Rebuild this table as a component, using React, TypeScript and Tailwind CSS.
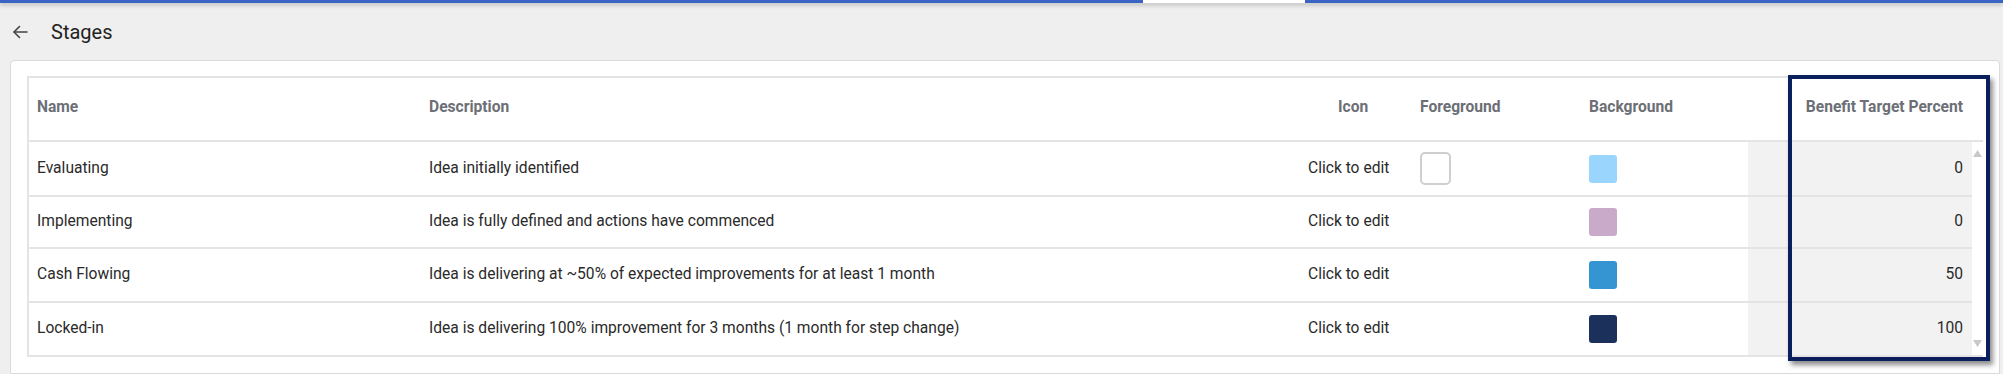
import React from "react";

const rows = [
  { name: "Evaluating", desc: "Idea initially identified", fg: true, bg: "#9ad5fd", pct: "0", h: "h-[53px]" },
  { name: "Implementing", desc: "Idea is fully defined and actions have commenced", fg: false, bg: "#c9aac8", pct: "0", h: "h-[50px]" },
  { name: "Cash Flowing", desc: "Idea is delivering at ~50% of expected improvements for at least 1 month", fg: false, bg: "#3595d3", pct: "50", h: "h-[52px]" },
  { name: "Locked-in", desc: "Idea is delivering 100% improvement for 3 months (1 month for step change)", fg: false, bg: "#1c305c", pct: "100", h: "h-[52px]" },
];

export default function App() {
  return (
    <div className="relative w-[2003px] h-[374px] overflow-hidden bg-[#efefef] font-['Roboto',_'Liberation_Sans',_sans-serif] flex flex-col">
      {/* top bar */}
      <div className="flex h-[3px] shrink-0 shadow-[0_2px_4px_rgba(0,0,0,0.25)] relative z-10">
        <div className="w-[1143px] bg-[#3b63c4]" />
        <div className="w-[162px] bg-white" />
        <div className="flex-1 bg-[#3b63c4]" />
      </div>

      {/* page header */}
      <div className="h-[57px] shrink-0 flex items-center pl-[12px]">
        <svg width="16" height="14" viewBox="0 0 16 14" fill="none" stroke="#444" strokeWidth="1.6" strokeLinecap="round" strokeLinejoin="round">
          <path d="M15 7H2" />
          <path d="M7.5 1.5L2 7l5.5 5.5" />
        </svg>
        <span className="ml-[23px] text-[20px] text-[#222] leading-none">Stages</span>
      </div>

      {/* card */}
      <div className="flex-1 ml-[10px] mr-[3px] bg-white border border-[#dadada] rounded-tl-[4px] rounded-tr-[4px] pt-[15px] px-[16px]">
        <div className="border-t-2 border-l-2 border-b-2 border-[#e4e4e4] text-[15.6px]">
          {/* header */}
          <div className="flex h-[64px] items-center pb-[3px] border-b-2 border-[#e4e4e4] font-bold text-[#6c6f76] text-[15.6px]">
            <div className="w-[390px] pl-[8px]">Name</div>
            <div className="w-[879px] pl-[10px]">Description</div>
            <div className="w-[112px] pl-[40px]">Icon</div>
            <div className="w-[169px] pl-[10px]">Foreground</div>
            <div className="w-[169px] pl-[10px]">Background</div>
            <div className="w-[224px] pr-[9px] text-right">Benefit Target Percent</div>
            <div className="w-[11px]" />
          </div>
          {/* body */}
          <div className="flex">
            <div className="flex flex-col w-[1943px]">
              {rows.map((r, i) => (
                <div key={r.name} className={`flex items-stretch ${r.h} box-content ${i < rows.length - 1 ? "border-b-2 border-[#e4e4e4]" : ""} text-[#2a2a2a]`}>
                  <div className="w-[390px] pl-[8px] flex items-center">{r.name}</div>
                  <div className="w-[879px] pl-[10px] flex items-center">{r.desc}</div>
                  <div className="w-[112px] pl-[10px] flex items-center">Click to edit</div>
                  <div className="w-[169px] pl-[10px] flex items-center">
                    {r.fg && <div className="w-[31px] h-[33px] rounded-[5px] border-2 border-[#cfcfcf] bg-white" />}
                  </div>
                  <div className="w-[169px] pl-[10px] flex items-center">
                    <div className="w-[28px] h-[28px] rounded-[3px]" style={{ backgroundColor: r.bg }} />
                  </div>
                  <div className="w-[224px] pr-[9px] flex items-center justify-end bg-[#f2f2f2]">{r.pct}</div>
                </div>
              ))}
            </div>
            <div className="w-[11px] flex flex-col justify-between items-center py-[8px]">
              <svg width="9" height="7" viewBox="0 0 9 7"><path d="M4.5 0L9 7H0z" fill="#c8c8c8" /></svg>
              <svg width="9" height="7" viewBox="0 0 9 7"><path d="M0 0h9L4.5 7z" fill="#c8c8c8" /></svg>
            </div>
          </div>
        </div>
      </div>

      {/* highlight box overlay */}
      <div className="absolute left-[1788px] top-[75px] w-[202px] h-[286px] border-[4px] border-[#0b1f5c] shadow-[3px_4px_5px_rgba(0,0,0,0.45)]" />
    </div>
  );
}
